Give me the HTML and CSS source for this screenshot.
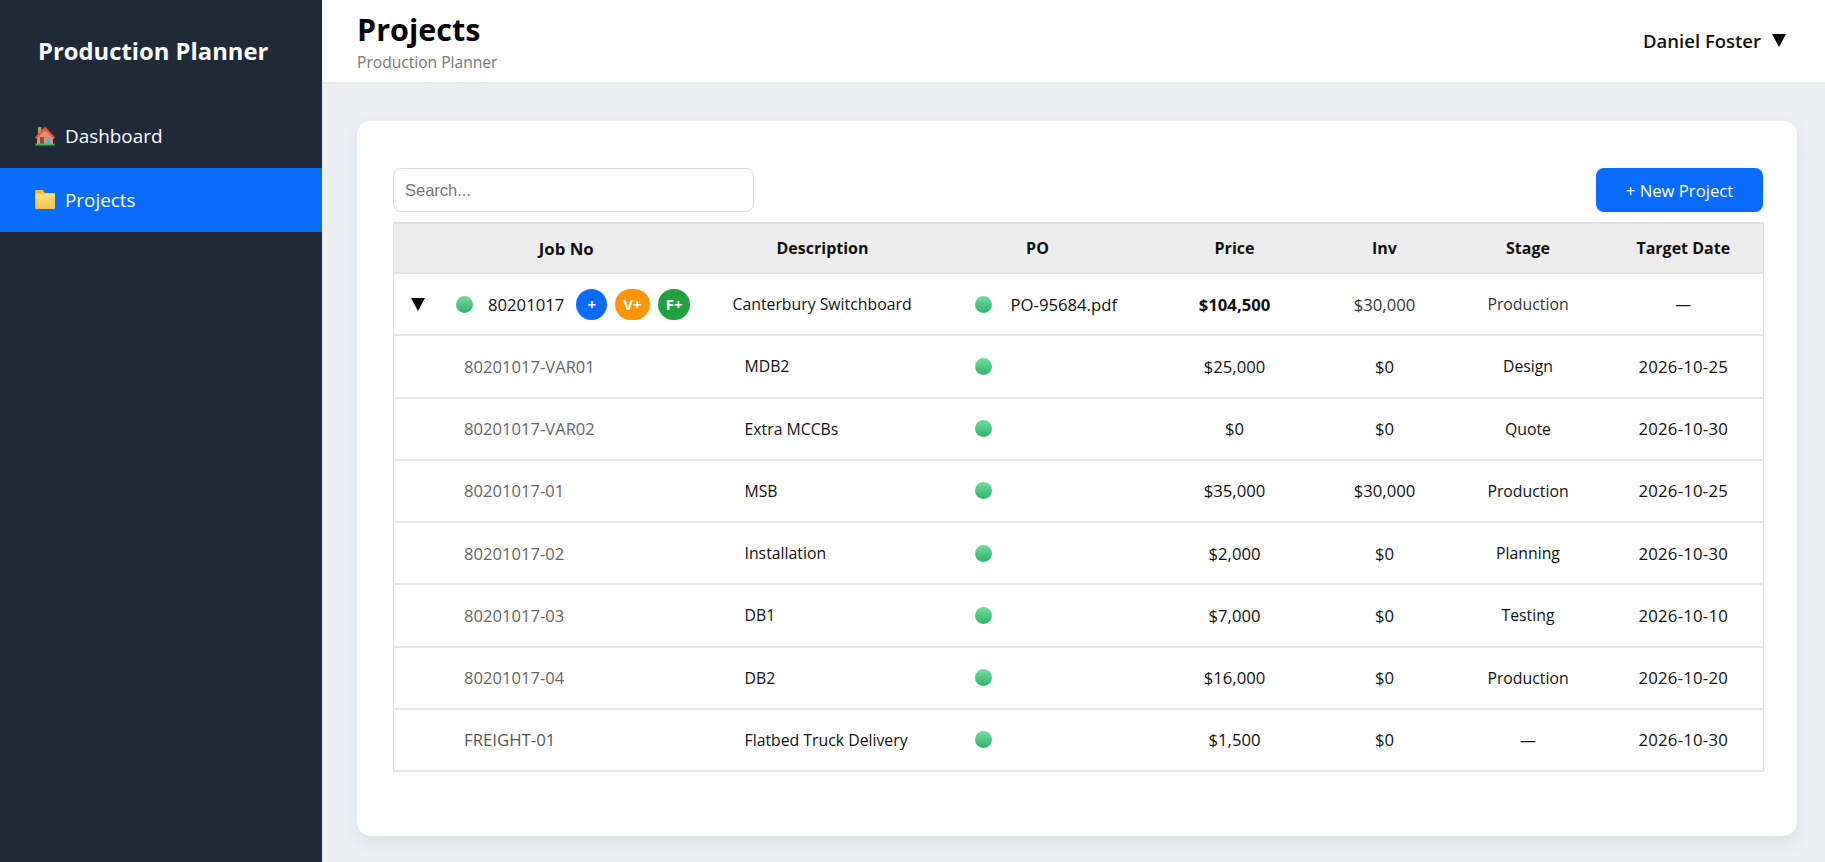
FILE: index.html
```html
<!DOCTYPE html>
<html lang="en">
<head>
<meta charset="utf-8">
<title>Production Planner</title>
<link rel="stylesheet" href="styles.css">
</head>
<body>
<div class="app">
  <aside class="sidebar">
    <div class="brand">Production Planner</div>
    <nav class="nav">
      <a class="nav-item">
        <svg class="nav-icon" viewBox="0 0 22 22"><rect x="4" y="2" width="3.500" height="7" fill="#a9a04c"/><path d="M3 11 11 2.500l8 8.500v8H3z" fill="#ef8a6a"/><path d="M11 1.500 0.800 12.500 2.300 14 11 5l8.700 9 1.500-1.500z" fill="#e0583f"/><rect x="6" y="12" width="4" height="7" fill="#6d5a55"/><rect x="12.500" y="12" width="4" height="6" fill="#5faad8"/><rect x="1.200" y="18.500" width="19.600" height="2" fill="#4cb050"/></svg>
        <span>Dashboard</span>
      </a>
      <a class="nav-item active">
        <svg class="nav-icon" viewBox="0 0 22 22"><defs><linearGradient id="folderFill" x1="0" y1="0" x2="0" y2="1"><stop offset="0" stop-color="#ffe27e"/><stop offset="1" stop-color="#f6c44c"/></linearGradient></defs><path d="M1 2.500C1 1.700 1.700 1 2.500 1h6.300l2.200 3h9.500c.3 0 .500.200.500.500V8H1z" fill="#f2b62f"/><rect x="1" y="4.500" width="20" height="15.500" rx="1" fill="url(#folderFill)"/></svg>
        <span>Projects</span>
      </a>
    </nav>
  </aside>
  <div class="main">
    <header class="topbar">
      <div class="titles">
        <h1 class="page-title">Projects</h1>
        <div class="page-sub">Production Planner</div>
      </div>
      <div class="user"><span>Daniel Foster</span><span class="user-caret"></span></div>
    </header>
    <main class="content">
      <section class="card">
        <div class="toolbar">
          <input class="search" type="text" placeholder="Search...">
          <button class="new-btn">+ New Project</button>
        </div>
        <table class="jobs">
          <colgroup>
            <col class="c-job"><col class="c-desc"><col class="c-po"><col class="c-price"><col class="c-inv"><col class="c-stage"><col class="c-date">
          </colgroup>
          <thead>
            <tr><th class="th-job">Job No</th><th>Description</th><th>PO</th><th>Price</th><th>Inv</th><th>Stage</th><th>Target Date</th></tr>
          </thead>
          <tbody>
            <tr>
              <td><div class="job-wrap"><span class="caret"></span><span class="dot"></span><span class="job-num">80201017</span><span class="badge b-blue">+</span><span class="badge b-orange">V+</span><span class="badge b-green">F+</span></div></td>
              <td class="desc-parent">Canterbury Switchboard</td>
              <td class="po"><div class="po-wrap"><span class="dot"></span><span class="po-file">PO-95684.pdf</span></div></td>
              <td class="num d"><b>$104,500</b></td><td class="num d muted">$30,000</td><td class="num stage">Production</td><td class="num">—</td>
            </tr>
            <tr><td class="job-child">80201017-VAR01</td><td class="desc-child">MDB2</td><td class="po"><div class="po-wrap"><span class="dot"></span></div></td><td class="num d">$25,000</td><td class="num d">$0</td><td class="num">Design</td><td class="num date">2026-10-25</td></tr>
            <tr><td class="job-child">80201017-VAR02</td><td class="desc-child">Extra MCCBs</td><td class="po"><div class="po-wrap"><span class="dot"></span></div></td><td class="num d">$0</td><td class="num d">$0</td><td class="num">Quote</td><td class="num date">2026-10-30</td></tr>
            <tr><td class="job-child">80201017-01</td><td class="desc-child">MSB</td><td class="po"><div class="po-wrap"><span class="dot"></span></div></td><td class="num d">$35,000</td><td class="num d">$30,000</td><td class="num">Production</td><td class="num date">2026-10-25</td></tr>
            <tr><td class="job-child">80201017-02</td><td class="desc-child">Installation</td><td class="po"><div class="po-wrap"><span class="dot"></span></div></td><td class="num d">$2,000</td><td class="num d">$0</td><td class="num">Planning</td><td class="num date">2026-10-30</td></tr>
            <tr><td class="job-child">80201017-03</td><td class="desc-child">DB1</td><td class="po"><div class="po-wrap"><span class="dot"></span></div></td><td class="num d">$7,000</td><td class="num d">$0</td><td class="num">Testing</td><td class="num date">2026-10-10</td></tr>
            <tr><td class="job-child">80201017-04</td><td class="desc-child">DB2</td><td class="po"><div class="po-wrap"><span class="dot"></span></div></td><td class="num d">$16,000</td><td class="num d">$0</td><td class="num">Production</td><td class="num date">2026-10-20</td></tr>
            <tr><td class="job-child freight">FREIGHT-01</td><td class="desc-child">Flatbed Truck Delivery</td><td class="po"><div class="po-wrap"><span class="dot"></span></div></td><td class="num d">$1,500</td><td class="num d">$0</td><td class="num">—</td><td class="num date">2026-10-30</td></tr>
          </tbody>
        </table>
      </section>
    </main>
  </div>
</div>
</body>
</html>
```
FILE: styles.css
```css
* { box-sizing: border-box; }
html, body { margin: 0; height: 100%; }
body { font-family: "Open Sans", "Noto Sans", sans-serif; color: #111; background: #eef0f4; overflow: hidden; }
.app { display: flex; height: 862px; }

.sidebar { width: 322px; flex: none; background: #1f2937; color: #fff; }
.brand { height: 104px; padding: 34px 0 0 38px; font-size: 23.800px; font-weight: 700; line-height: 34px; }
.nav-item { display: flex; align-items: center; gap: 9px; height: 64px; padding-left: 34px; font-size: 18.900px; color: #fff; }
.nav-item.active { background: #0a6cff; }
.nav-icon { width: 22px; height: 22px; flex: none; }

.main { flex: 1; display: flex; flex-direction: column; min-width: 0; }
.topbar { height: 84px; flex: none; background: #fff; border-bottom: 2px solid #e6e8ec; display: flex; justify-content: space-between; padding: 8px 39px 0 35px; }
.page-title { margin: 0; font-size: 30.500px; line-height: 42px; font-weight: 700; color: #000; }
.page-sub { font-size: 15.600px; line-height: 24px; color: #777; }
.user { display: flex; align-items: center; gap: 11px; height: 50px; margin-top: 7px; font-size: 18.500px; font-weight: 600; }
.user-caret { width: 0; height: 0; border-left: 7.500px solid transparent; border-right: 7.500px solid transparent; border-top: 13px solid #000; }

.content { flex: 1; padding: 37px 28px 26px 35px; }
.card { height: 715px; background: #fff; border-radius: 14px; box-shadow: 0 6px 18px rgba(30, 40, 60, .08); padding: 47px 34px 0 36px; }
.toolbar { display: flex; justify-content: space-between; align-items: center; height: 44px; margin-bottom: 10px; }
.search { width: 361px; height: 44px; border: 1px solid #d9dbde; border-radius: 8px; padding: 0 11px; font-family: "Liberation Sans", sans-serif; font-size: 16.500px; background: #fff; outline: none; }
.search::placeholder { color: #767676; opacity: 1; }
.new-btn { width: 167px; height: 44px; border: 0; border-radius: 8px; background: #0a6cff; color: #fff; font-family: inherit; font-size: 16.700px; }

.jobs { width: 1370px; table-layout: fixed; border-collapse: collapse; font-size: 15.800px; }
.c-job { width: 329px; } .c-desc { width: 200px; } .c-po { width: 230px; } .c-price { width: 164px; } .c-inv { width: 136px; } .c-stage { width: 151px; } .c-date { width: 160px; }
.jobs thead tr { height: 50px; background: #ededed; }
.jobs tbody tr { height: 62.250px; }
.jobs th { font-weight: 700; font-size: 16px; border-top: 2px solid #e2e2e2; border-bottom: 2px solid #e4e4e4; padding: 0; }
.jobs th:first-child { border-left: 1px solid #ddd; }
.jobs th:last-child { border-right: 1px solid #ddd; }
.th-job { padding-left: 16px !important; font-size: 16.800px !important; }
.jobs td { border-bottom: 2px solid #e8e8ea; padding: 0; }
.jobs td:first-child { border-left: 1px solid #ddd; }
.jobs td:last-child { border-right: 1px solid #ddd; }
.num { text-align: center; }
.d { font-size: 16.700px; }
.date { font-size: 16.800px; letter-spacing: .2px; }
.muted, .stage { color: #333; }

.job-wrap { display: flex; align-items: center; padding-left: 17px; }
.caret { width: 0; height: 0; border-left: 7px solid transparent; border-right: 7px solid transparent; border-top: 13px solid #000; margin-right: 31px; }
.dot { display: block; width: 17px; height: 17px; border-radius: 50%; background: linear-gradient(180deg, #72dc9f, #2fb26c); flex: none; }
.job-num { margin: 0 12px 0 15px; font-size: 16.700px; }
.badge { height: 31px; min-width: 31px; padding: 0 8px; margin-right: 8px; border-radius: 16px; color: #fff; font-size: 15px; font-weight: 700; display: inline-flex; align-items: center; justify-content: center; }
.b-blue { background: #0a6cff; }
.b-orange { background: #ff9408; }
.b-green { background: #22a03f; }
.desc-parent { padding-left: 10px !important; }
.desc-child { padding-left: 22px !important; }
.job-child { padding-left: 70px !important; color: #666; font-size: 16.600px; }
.freight { color: #555; font-size: 16.800px; }
.po { padding-left: 52px !important; }
.po-wrap { display: flex; align-items: center; gap: 19px; }
.po-file { font-size: 16.700px; }
```
